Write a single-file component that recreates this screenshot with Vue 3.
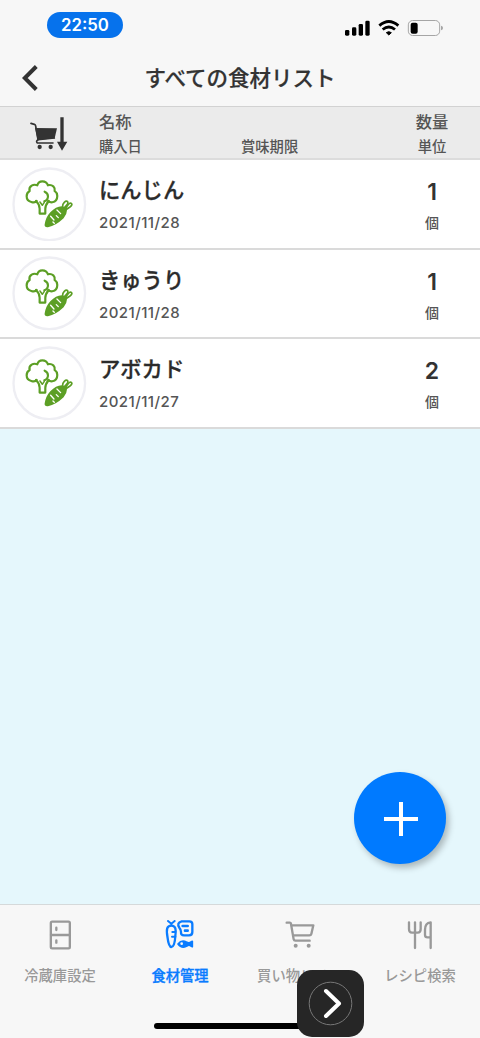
<template>
    <div class="screen">
        <header class="top">
            <div class="status">
                <span class="clock">22:50</span>
                <svg class="status-icons" viewBox="0 0 294 48">
                    <g fill="#000">
                        <rect x="0" y="30" width="13" height="17" rx="4" />
                        <rect x="21" y="22" width="13" height="25" rx="4" />
                        <rect x="41" y="12" width="13" height="35" rx="4" />
                        <rect x="61" y="2" width="13" height="45" rx="4" />
                        <path d="M124 38Q131 32 139 38L131.500 45Z" stroke="#000" stroke-width="3" stroke-linejoin="round" />
                    </g>
                    <g fill="none" stroke="#000" stroke-width="8.500">
                        <path d="M103 17Q131.500-8 160 17" />
                        <path d="M113 28.500Q131.500 13 150 28.500" />
                    </g>
                    <rect x="190" y="1.500" width="94" height="45" rx="13" fill="none" stroke="#a5a5a5" stroke-width="3" />
                    <rect x="197" y="8" width="21" height="33" rx="6" fill="#000" />
                    <path d="M288 17Q294 18 294 24T288 31Z" fill="#a5a5a5" />
                </svg>
            </div>
            <div class="nav">
                <svg class="back" viewBox="0 0 16 26">
                    <path d="M14.300 1.500L2.800 13L14.300 24.500" />
                </svg>
                <h1>すべての食材リスト</h1>
            </div>
        </header>

        <div class="list-head">
            <div class="lead">
                <svg class="sort-icon" viewBox="90 50 114 102">
                    <g fill="none" stroke="#333" stroke-width="5" stroke-linecap="round" stroke-linejoin="round">
                        <path d="M93 69L103 72Q106 73 107 77L114 118Q107 122 112 128H159" />
                        <path d="M114 118L163 113" />
                    </g>
                    <path d="M105 83L171 84L164 114L113 119Z" fill="#333" />
                    <circle cx="119" cy="140" r="6.500" fill="#333" />
                    <circle cx="152" cy="140" r="6.500" fill="#333" />
                    <path d="M181 51H191V124H202L186 151L171 124H181Z" fill="#333" />
                </svg>
            </div>
            <div class="head-main">
                <div class="head-name">名称</div>
                <div class="head-dates">
                    <span class="bought">購入日</span>
                    <span>賞味期限</span>
                </div>
            </div>
            <div class="head-amount">
                <div class="head-name">数量</div>
                <div class="head-dates">単位</div>
            </div>
        </div>

        <ul class="list">
            <li v-for="item in foods" :key="item.name" class="item">
                <div class="lead">
                    <svg class="food-icon" viewBox="22 20 224 224">
                        <circle cx="134" cy="132" r="107.500" fill="#fff" stroke="#eeeef3" stroke-width="7" />
                        <g fill="none" stroke="#5c9f25" stroke-width="6.500" stroke-linecap="round" stroke-linejoin="round">
                            <path
                                d="M96 122Q91 129 80 125Q66 122 66 108Q66 97 75 92Q72 82 81 76Q89 71 98 75Q101 63 113 63Q126 63 130 75Q139 72 146 78Q152 84 150 92Q158 98 158 107Q158 123 143 126Q136 127 131 122"
                            />
                            <path d="M120 94Q130 98 130 108Q130 120 119 123" />
                            <path d="M94 122Q105 132 105 145V160H122V146Q122 135 132 122" />
                            <path d="M106 125L113 135L119 126" stroke-width="4.500" />
                            <path d="M174 138Q174 131 179 126Q185 120 189 124Q192 128 185 136L180 142" stroke-width="5" />
                            <path d="M184 142L190 134Q196 126 201 130Q204 134 196 140L186 147" stroke-width="5" />
                        </g>
                        <path d="M120 193Q123 171 137 156Q155 137 173 138Q188 139 187 151Q187 163 177 174Q154 196 130 201Q119 202 120 193Z" fill="#5c9f25" />
                        <g fill="none" stroke="#fff" stroke-width="4" stroke-linecap="round">
                            <path d="M138 168L148 179" />
                            <path d="M157 149L168 160" />
                            <path d="M155 166L161 172" />
                            <path d="M145 185L149 189" />
                        </g>
                    </svg>
                </div>
                <div class="item-main">
                    <div class="item-name">{{ item.name }}</div>
                    <div class="item-date">{{ item.date }}</div>
                </div>
                <div class="item-amount">
                    <div class="count">{{ item.count }}</div>
                    <div class="unit">{{ item.unit }}</div>
                </div>
            </li>
        </ul>

        <button class="add" aria-label="追加">
            <svg viewBox="0 0 34 34"><path d="M17 0V34M0 17H34" /></svg>
        </button>

        <nav class="tabs">
            <a
                v-for="tab in tabs"
                :key="tab.id"
                class="tab"
                :class="{ active: tab.id === current }"
                @click="current = tab.id"
            >
                <svg v-if="tab.id === 'fridge'" class="tab-icon" viewBox="0 0 90 90">
                    <rect x="17.500" y="5" width="57" height="80" rx="4" />
                    <path d="M18 45H74M34 23V30M34 61V68" />
                </svg>
                <svg v-else-if="tab.id === 'food'" class="tab-icon" viewBox="0 0 90 90">
                    <path d="M19 17C5 17 4 29 7 48C9 65 12 81 19 81C27 81 30 65 31 48C34 29 32 17 19 17Z" stroke-width="7" />
                    <path d="M9 3L19 11L29 3M19 11V16M22 36H31M21 50H31" stroke-width="6" />
                    <path d="M50 4H73Q82 4 82 12V36Q82 46 72 46H57Q47 46 48 35Q48 29 43 23Q34 8 50 4Z" stroke-width="7" />
                    <path d="M53 18H68M60 32H68" stroke-width="8" />
                    <path d="M39 72Q50 58 64 66L72 69L82 64V80L72 75L64 79Q49 86 39 72Z" fill="currentColor" stroke-width="5" />
                    <circle cx="50" cy="71" r="4" fill="#f7f7f7" stroke="none" />
                </svg>
                <svg v-else-if="tab.id === 'cart'" class="tab-icon" viewBox="0 0 90 90">
                    <path d="M5 8H15Q18 8 18 12L26 58Q27 62 31 62H74M20 16H85L79 42Q78 46 73 46H24" />
                    <circle cx="32" cy="77" r="6" fill="currentColor" stroke="none" />
                    <circle cx="71" cy="77" r="6" fill="currentColor" stroke="none" />
                </svg>
                <svg v-else class="tab-icon" viewBox="0 0 90 90">
                    <path d="M12 7V27Q12 38 21 38H38Q47 38 47 27V7M30 7V84M77 84V7Q60 9 60 29V44Q60 52 68 52H76" />
                </svg>
                <span class="tab-label">{{ tab.label }}</span>
            </a>
        </nav>

        <div class="home-bar"></div>
        <div class="assist">
            <svg viewBox="0 0 67 67">
                <circle cx="33.500" cy="33.500" r="21.300" fill="none" stroke="#777" stroke-width="1" />
                <path d="M29 21L42 33.500L29 46" fill="none" stroke="#fff" stroke-width="4" stroke-linecap="round" stroke-linejoin="round" />
            </svg>
        </div>
    </div>
</template>

<script setup>
import { ref } from "vue";

const current = ref("food");

const foods = [
    { name: "にんじん", date: "2021/11/28", count: 1, unit: "個" },
    { name: "きゅうり", date: "2021/11/28", count: 1, unit: "個" },
    { name: "アボカド", date: "2021/11/27", count: 2, unit: "個" },
];

const tabs = [
    { id: "fridge", label: "冷蔵庫設定" },
    { id: "food", label: "食材管理" },
    { id: "cart", label: "買い物リスト" },
    { id: "recipe", label: "レシピ検索" },
];
</script>

<style>
body {
    margin: 0;
}
</style>

<style scoped>
.screen {
    position: relative;
    box-sizing: border-box;
    width: 480px;
    height: 1038px;
    display: flex;
    flex-direction: column;
    overflow: hidden;
    background: #e5f7fc;
    color: #333;
    font-family: Inter, "Noto Sans CJK JP", sans-serif;
}
.top {
    box-sizing: border-box;
    height: 106px;
    background: #f7f7f7;
}
.status {
    display: flex;
    justify-content: space-between;
    padding: 12px 37px 0 47px;
    height: 38px;
}
.clock {
    width: 76px;
    height: 26px;
    border-radius: 13px;
    background: #0672ec;
    color: #fff;
    font-size: 16.8px;
    font-weight: 600;
    line-height: 27px;
    text-align: center;
}
.status-icons {
    width: 98px;
    height: 16px;
    margin-top: 8px;
}
.nav {
    display: flex;
    align-items: center;
    height: 56px;
    padding: 0 22px;
}
.back {
    width: 16px;
    height: 26px;
    fill: none;
    stroke: #333;
    stroke-width: 4;
}
h1 {
    flex: 1;
    margin: 0 16px 0 0;
    font-size: 21.5px;
    font-weight: 500;
    line-height: 30px;
    text-align: center;
    -webkit-text-stroke: 0.2px;
}
.list-head {
    box-sizing: border-box;
    display: flex;
    height: 54px;
    border-top: 1px solid #d2d2d2;
    border-bottom: 2px solid #dcdcdc;
    background: #ebebeb;
    color: #555;
    font-weight: 500;
}
.lead {
    display: flex;
    align-items: center;
    justify-content: center;
    width: 99px;
}
.sort-icon {
    width: 38px;
    height: 34px;
    margin-top: 2px;
    margin-right: 2px;
}
.head-main {
    flex: 1;
}
.head-name {
    padding-top: 3px;
    font-size: 16.3px;
    line-height: 25px;
}
.head-dates {
    display: flex;
    font-size: 14.3px;
    line-height: 24px;
}
.bought {
    width: 142px;
}
.head-amount {
    display: flex;
    flex-direction: column;
    align-items: center;
    width: 96px;
}
.list {
    flex: 1;
    margin: 0;
    padding: 0;
    list-style: none;
}
.item {
    box-sizing: border-box;
    display: flex;
    height: 89.6px;
    border-bottom: 2px solid #dadada;
    background: #fff;
}
.food-icon {
    width: 74.600px;
    height: 74.600px;
}
.item-main {
    flex: 1;
    padding-top: 14px;
}
.item-name {
    font-size: 21.3px;
    font-weight: 500;
    line-height: 32px;
    color: #2b2b2b;
    -webkit-text-stroke: 0.3px;
}
.item-date {
    margin-top: 7px;
    font-size: 15px;
    font-weight: 500;
    letter-spacing: 0.45px;
    line-height: 20px;
    color: #555;
}
.item-amount {
    width: 96px;
    padding-top: 17px;
    text-align: center;
}
.count {
    font-size: 23px;
    font-weight: 600;
    line-height: 31px;
}
.unit {
    margin-top: 4px;
    font-size: 14px;
    font-weight: 500;
    line-height: 21px;
    color: #555;
}
.add {
    position: absolute;
    left: 354px;
    top: 772px;
    display: flex;
    align-items: center;
    justify-content: center;
    width: 92px;
    height: 92px;
    padding: 0;
    border: 0;
    border-radius: 50%;
    background: #007aff;
    box-shadow: 3px 4px 6px rgba(0, 0, 0, 0.25);
}
.add svg {
    width: 34px;
    height: 34px;
    margin-top: 2px;
    margin-left: 1px;
    fill: none;
    stroke: #fff;
    stroke-width: 4;
}
.tabs {
    box-sizing: border-box;
    display: flex;
    height: 134px;
    border-top: 1px solid #d5d9da;
    background: #f7f7f7;
}
.tab {
    flex: 1;
    display: flex;
    flex-direction: column;
    align-items: center;
    padding-top: 15px;
    color: #999;
}
.tab.active {
    color: #0a7cff;
}
.tab-icon {
    width: 30px;
    height: 30px;
    fill: none;
    stroke: currentColor;
    stroke-width: 7;
    stroke-linecap: round;
    stroke-linejoin: round;
}
.tab-label {
    margin-top: 16px;
    font-size: 14.3px;
    font-weight: 500;
    line-height: 20px;
    white-space: nowrap;
}
.active .tab-label {
    -webkit-text-stroke: 0.3px;
}
.home-bar {
    position: absolute;
    left: 154px;
    bottom: 9px;
    width: 172px;
    height: 6px;
    border-radius: 3px;
    background: #000;
}
.assist {
    position: absolute;
    left: 297px;
    top: 970px;
    width: 67px;
    height: 67px;
    border-radius: 15px;
    background: #262626;
}
.assist svg {
    display: block;
}
</style>
